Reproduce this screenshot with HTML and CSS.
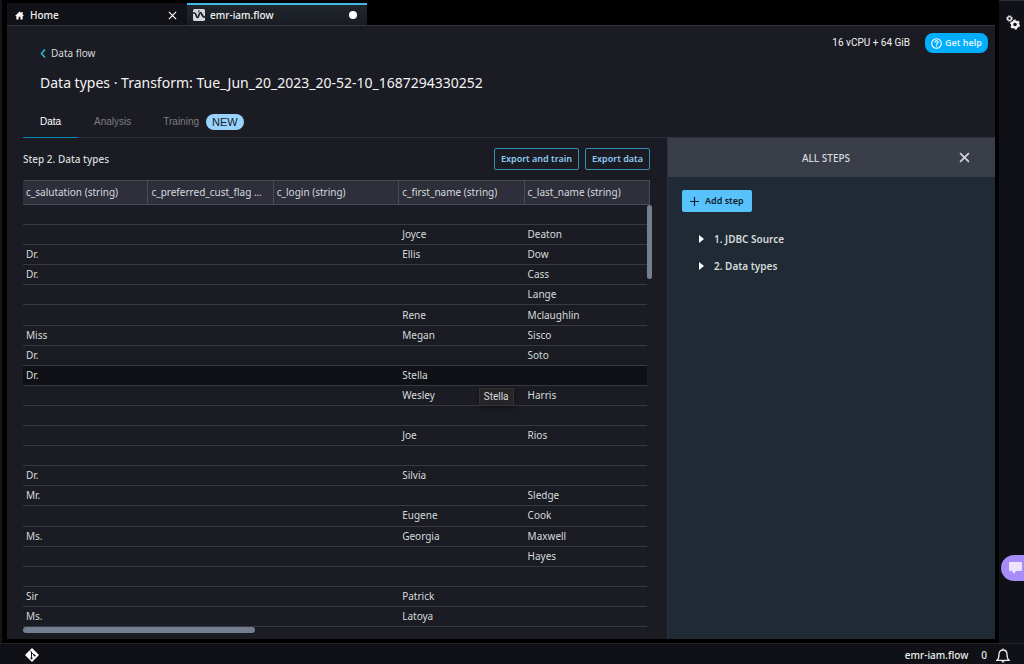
FILE: index.html
```
<!DOCTYPE html>
<html lang="en">
<head>
    <meta charset="UTF-8">
    <meta name="viewport" content="width=device-width, initial-scale=1.0">
    <title>emr-iam.flow</title>
    <link rel="stylesheet" href="styles.css">
</head>
<body>
    <div class="workspace">
        <div class="left-edge"></div>
        <div class="main">
            <div class="file-tabs">
                <div class="file-tab">
                    <svg class="icon-home" viewBox="0 0 20 20"><path d="M10 1L0 11h3v8h5v-6h4v6h5v-8h3l-3-3V2h-3v3z" fill="#fff"/></svg>
                    <span class="file-name">Home</span>
                    <button class="icon-button" aria-label="Close Home">
                        <svg class="icon-small" viewBox="0 0 10 10"><path d="M1 1l8 8M9 1l-8 8" stroke="#fff" stroke-width="1.3"/></svg>
                    </button>
                </div>
                <div class="file-tab active">
                    <svg class="icon-flow" viewBox="0 0 24 24"><rect width="24" height="24" rx="3" fill="#d5d7da"/><path d="M0 8h3c4 0 3 9 6 9s3-10 6-10 2 10 9 9" fill="none" stroke="#1b2128" stroke-width="3.4"/><path d="M10 3h4l-3 4z" fill="#1b2128"/></svg>
                    <span class="file-name">emr-iam.flow</span>
                    <span class="unsaved-dot"></span>
                </div>
            </div>

            <div class="panel">
                <header class="panel-header">
                    <div class="heading">
                        <a class="back-link" href="#">
                            <svg class="icon-back" viewBox="0 0 6 9"><path d="M5 .5L1.500 4.500 5 8.500" fill="none" stroke="#2bb5c4" stroke-width="1.600"/></svg>
                            Data flow
                        </a>
                        <h1>Data types · Transform: Tue_Jun_20_2023_20-52-10_1687294330252</h1>
                    </div>
                    <div class="header-actions">
                        <span class="instance">16 vCPU + 64 GiB</span>
                        <button class="help-button">
                            <svg class="icon-help" viewBox="0 0 12 12" fill="none" stroke="#fff" stroke-width="1.200"><circle cx="6" cy="6" r="5.200"/><path d="M4.300 4.800c0-2.300 3.400-2.200 3.400-.2 0 1.200-1.700 1.200-1.700 2.400M6 8v1.200"/></svg>
                            Get help
                        </button>
                    </div>
                </header>

                <nav class="view-tabs">
                    <button class="view-tab active">Data</button>
                    <button class="view-tab">Analysis</button>
                    <button class="view-tab">Training <span class="badge">NEW</span></button>
                </nav>

                <div class="content">
                    <section class="data">
                        <div class="toolbar">
                            <h2>Step 2. Data types</h2>
                            <button class="outline-button">Export and train</button>
                            <button class="outline-button">Export data</button>
                        </div>
                        <div class="table-wrap">
                            <table>
                                <thead>
                                    <tr>
                                        <th>c_salutation (string)</th>
                                        <th>c_preferred_cust_flag ...</th>
                                        <th>c_login (string)</th>
                                        <th>c_first_name (string)</th>
                                        <th>c_last_name (string)</th>
                                    </tr>
                                </thead>
                                <tbody>
                                    <tr><td></td><td></td><td></td><td></td><td></td></tr>
                                    <tr><td></td><td></td><td></td><td>Joyce</td><td>Deaton</td></tr>
                                    <tr><td>Dr.</td><td></td><td></td><td>Ellis</td><td>Dow</td></tr>
                                    <tr><td>Dr.</td><td></td><td></td><td></td><td>Cass</td></tr>
                                    <tr><td></td><td></td><td></td><td></td><td>Lange</td></tr>
                                    <tr><td></td><td></td><td></td><td>Rene</td><td>Mclaughlin</td></tr>
                                    <tr><td>Miss</td><td></td><td></td><td>Megan</td><td>Sisco</td></tr>
                                    <tr><td>Dr.</td><td></td><td></td><td></td><td>Soto</td></tr>
                                    <tr class="hovered"><td>Dr.</td><td></td><td></td><td>Stella</td><td></td></tr>
                                    <tr><td></td><td></td><td></td><td class="has-tooltip">Wesley<span class="tooltip">Stella</span></td><td>Harris</td></tr>
                                    <tr><td></td><td></td><td></td><td></td><td></td></tr>
                                    <tr><td></td><td></td><td></td><td>Joe</td><td>Rios</td></tr>
                                    <tr><td></td><td></td><td></td><td></td><td></td></tr>
                                    <tr><td>Dr.</td><td></td><td></td><td>Silvia</td><td></td></tr>
                                    <tr><td>Mr.</td><td></td><td></td><td></td><td>Sledge</td></tr>
                                    <tr><td></td><td></td><td></td><td>Eugene</td><td>Cook</td></tr>
                                    <tr><td>Ms.</td><td></td><td></td><td>Georgia</td><td>Maxwell</td></tr>
                                    <tr><td></td><td></td><td></td><td></td><td>Hayes</td></tr>
                                    <tr><td></td><td></td><td></td><td></td><td></td></tr>
                                    <tr><td>Sir</td><td></td><td></td><td>Patrick</td><td></td></tr>
                                    <tr><td>Ms.</td><td></td><td></td><td>Latoya</td><td></td></tr>
                                </tbody>
                            </table>
                            <div class="scroll-y"><div class="thumb-y"></div></div>
                            <div class="thumb-x"></div>
                        </div>
                    </section>

                    <aside class="steps">
                        <div class="steps-header">
                            <h2>ALL STEPS</h2>
                            <button class="icon-button" aria-label="Close steps">
                                <svg class="icon-close" viewBox="0 0 10 10"><path d="M1 1l8 8M9 1l-8 8" stroke="#d0d3d6" stroke-width="1.600"/></svg>
                            </button>
                        </div>
                        <div class="steps-body">
                            <button class="add-button">
                                <svg class="icon-small" viewBox="0 0 10 10"><path d="M5 0v10M0 5h10" stroke="#0f1b2a" stroke-width="1.300"/></svg>
                                Add step
                            </button>
                            <ul class="step-list">
                                <li><button class="step">1. JDBC Source</button></li>
                                <li><button class="step">2. Data types</button></li>
                            </ul>
                        </div>
                    </aside>
                </div>
            </div>
        </div>

        <div class="rail">
            <button class="icon-button" aria-label="Settings">
                <svg class="icon-gears" viewBox="0 0 14 15" fill="none" stroke="#f2f2f2">
                    <circle cx="3.500" cy="3.500" r="1.900" stroke-width="1.400"/>
                    <circle cx="3.500" cy="3.500" r="2.800" stroke-width="1" stroke-dasharray="1.200 1"/>
                    <circle cx="9" cy="9.500" r="2.900" stroke-width="2.200"/>
                    <circle cx="9" cy="9.500" r="4.200" stroke-width="1.600" stroke-dasharray="2.400 2"/>
                </svg>
            </button>
            <button class="chat-button" aria-label="Open chat">
                <svg class="icon-chat" viewBox="0 0 13 13"><path d="M1 0h11a1 1 0 0 1 1 1v7a1 1 0 0 1-1 1H7l-2 3-2-3H1a1 1 0 0 1-1-1V1a1 1 0 0 1 1-1z" fill="#ece4ff"/></svg>
            </button>
        </div>
    </div>

    <footer class="status-bar">
        <svg class="icon-git" viewBox="0 0 14 14"><path d="M7 1l6 6-6 6-6-6z" fill="#fff" stroke="#fff" stroke-width="1.500" stroke-linejoin="round"/><path d="M5 2.500l1.500 1.500v6.500M6.500 4.500l3 3" stroke="#101116" fill="none"/><circle cx="6.500" cy="10.300" r="1.100" fill="#101116"/><circle cx="9.500" cy="7.500" r="1.100" fill="#101116"/></svg>
        <span class="status-file">emr-iam.flow</span>
        <span>0</span>
        <svg class="icon-bell" viewBox="0 0 14 15" fill="none" stroke="#eee" stroke-width="1.300"><path d="M1 12.300c1.800-1.500 2-3 2-6C3 3.500 4.500 2 7 2s4 1.500 4 4.300c0 3 .2 4.500 2 6zM7 2V.5"/><path d="M5.700 13.800h2.600"/></svg>
    </footer>
</body>
</html>
```

FILE: styles.css
```
* {
    margin: 0;
    padding: 0;
    box-sizing: border-box;
}

body {
    display: flex;
    flex-direction: column;
    min-height: 100vh;
    background: #000;
    color: #d5dbdb;
    font-family: 'Noto Sans', 'Open Sans', sans-serif;
    font-size: 10px;
    line-height: 14px;
    overflow: hidden;
}

button {
    border: none;
    background: none;
    color: inherit;
    font: inherit;
    cursor: pointer;
}

svg {
    display: block;
    flex: none;
}

.icon-button {
    display: flex;
}

.icon-small {
    width: 9px;
    height: 9px;
}

/* Layout */
.workspace {
    flex: 1;
    display: flex;
}

.left-edge {
    width: 2px;
    margin-right: 5px;
    background: #15161c;
}

.main {
    flex: 1;
    display: flex;
    flex-direction: column;
    min-width: 0;
    padding: 3px 4px 4px 0;
}

/* File tabs */
.file-tabs {
    display: flex;
    height: 22px;
}

.file-tab {
    display: flex;
    align-items: center;
    gap: 6px;
    width: 180px;
    padding: 0 10px 0 8px;
    border-top: 2px solid #111217;
    background: #111217;
    color: #f2f3f3;
    font-weight: 500;
}

.file-tab.active {
    gap: 5px;
    padding-left: 6px;
    border-top-color: #44b9e6;
    background: linear-gradient(#20252c, #191b22);
}

.file-name {
    flex: 1;
}

.icon-home {
    width: 9px;
    height: 9px;
}

.icon-flow {
    width: 12px;
    height: 12px;
}

.unsaved-dot {
    width: 8px;
    height: 8px;
    border-radius: 50%;
    background: #fff;
}

/* Panel */
.panel {
    flex: 1;
    display: flex;
    flex-direction: column;
    border-top: 1px solid #34353c;
    background: #1b1b23;
}

.panel-header {
    display: flex;
    justify-content: space-between;
    padding: 7px 7px 0 33px;
}

.back-link {
    display: flex;
    align-items: center;
    gap: 5px;
    margin-top: 13px;
    color: #d5dbdb;
    text-decoration: none;
}

.icon-back {
    width: 6px;
    height: 9px;
}

h1 {
    margin-top: 14px;
    color: #f2f3f3;
    font-size: 14px;
    font-weight: 400;
    line-height: 18px;
}

.header-actions {
    display: flex;
    align-items: flex-start;
    gap: 15px;
}

.instance {
    margin-top: 3px;
    color: #f2f3f3;
    font-family: 'Roboto', sans-serif;
}

.help-button,
.outline-button,
.add-button {
    font-size: 9px;
    font-weight: 600;
}

.help-button {
    display: flex;
    align-items: center;
    gap: 3px;
    height: 20px;
    padding: 0 6px;
    border-radius: 8px;
    background: #02aefc;
    color: #dff3ff;
}

.icon-help {
    width: 11px;
    height: 11px;
}

.view-tabs {
    display: flex;
    height: 31px;
    margin: 15px 0 0 16px;
    border-bottom: 1px solid #30313a;
    font-family: 'Liberation Sans', sans-serif;
}

.view-tab {
    display: flex;
    align-items: center;
    justify-content: center;
    gap: 7px;
    min-width: 55px;
    padding: 0 16px;
    color: #7c7d84;
}

.view-tab.active {
    height: 31px;
    border-bottom: 1px solid #0a87b5;
    color: #fff;
}

.badge {
    padding: 1px 6px;
    border-radius: 8px;
    background: #99d3fc;
    color: #16202b;
    font-size: 11px;
}

.content {
    flex: 1;
    display: flex;
}

/* Data table */
.data {
    flex: 1;
    min-width: 0;
    padding: 10px 17px 0 16px;
}

.toolbar {
    display: flex;
    align-items: center;
    gap: 6px;
    margin-bottom: 10px;
}

.toolbar h2 {
    flex: 1;
    font-size: 10px;
    font-weight: 500;
}

.outline-button {
    height: 22px;
    padding: 0 6px;
    border: 1px solid #3a8fb7;
    border-radius: 2px;
    color: #8bcbf3;
}

.table-wrap {
    position: relative;
    padding-bottom: 6px;
}

table {
    width: 100%;
    height: 447px;
    border-collapse: separate;
    border-spacing: 0;
    table-layout: fixed;
}

th {
    height: 25px;
    padding: 0 3px 1px;
    border: solid #4b4c51;
    border-width: 1px 1px 1px 0;
    background: #2e2f3b;
    font-weight: 400;
    text-align: left;
    white-space: nowrap;
}

th:first-child {
    border-top-left-radius: 3px;
}

td {
    height: 20px;
    padding: 0 3px 1px;
    border-bottom: 1px solid #373842;
}

.hovered td {
    background: #101116;
}

.has-tooltip {
    position: relative;
}

.tooltip {
    position: absolute;
    top: 2px;
    right: 11px;
    padding: 1px 4px;
    border: 1px solid #343236;
    background: #272427;
    box-shadow: 0 2px 4px rgba(0, 0, 0, 0.4);
    font-family: 'Roboto', sans-serif;
}

.scroll-y {
    position: absolute;
    top: 25px;
    right: -2px;
    bottom: 6px;
    width: 5px;
    background: #1b1b23;
}

.thumb-y {
    height: 74px;
    border-radius: 3px;
    background: #737f90;
}

.thumb-x {
    position: absolute;
    bottom: 0;
    left: 0;
    width: 37%;
    height: 6px;
    border-radius: 3px;
    background: #737f90;
}

/* Steps */
.steps {
    flex: 0 0 328px;
    border-left: 1px solid #2b3440;
    background: #1f2a35;
}

.steps-header {
    display: flex;
    align-items: center;
    height: 39px;
    padding: 0 25px;
    background: #393e49;
}

.steps-header h2 {
    flex: 1;
    font-size: 10px;
    font-weight: 500;
    text-align: center;
}

.icon-close {
    width: 11px;
    height: 11px;
}

.steps-body {
    padding: 13px 14px;
}

.add-button {
    display: flex;
    align-items: center;
    gap: 6px;
    height: 22px;
    padding: 0 8px;
    border-radius: 2px;
    background: #57c2fb;
    color: #0f1b2a;
}

.step-list {
    margin-top: 20px;
    padding-left: 17px;
    list-style: none;
}

.step-list li {
    margin-bottom: 13px;
}

.step {
    display: flex;
    align-items: center;
    gap: 10px;
    font-weight: 600;
}

.step::before {
    content: '';
    border: 4px solid transparent;
    border-right: 0;
    border-left: 5px solid #fff;
}

/* Right rail */
.rail {
    display: flex;
    flex-direction: column;
    justify-content: space-between;
    align-items: flex-end;
    width: 25px;
    padding: 14px 0 62px;
    border-top: 1px solid #2c2c3a;
    background: #101116;
}

.rail .icon-button {
    margin-right: 4px;
}

.icon-gears {
    width: 14px;
    height: 15px;
}

.chat-button {
    width: 23px;
    height: 26px;
    padding-left: 8px;
    border-radius: 13px 0 0 13px;
    background: #a78bf8;
}

.icon-chat {
    width: 13px;
    height: 13px;
}

/* Status bar */
.status-bar {
    display: flex;
    align-items: center;
    gap: 13px;
    height: 21px;
    padding: 2px 14px 0 25px;
    border-top: 1px solid #24252c;
    background: #101116;
    color: #eaeded;
    font-weight: 500;
}

.icon-git {
    width: 14px;
    height: 14px;
}

.status-file {
    margin-left: auto;
}

.icon-bell {
    width: 14px;
    height: 15px;
    margin-left: -4px;
}
```
